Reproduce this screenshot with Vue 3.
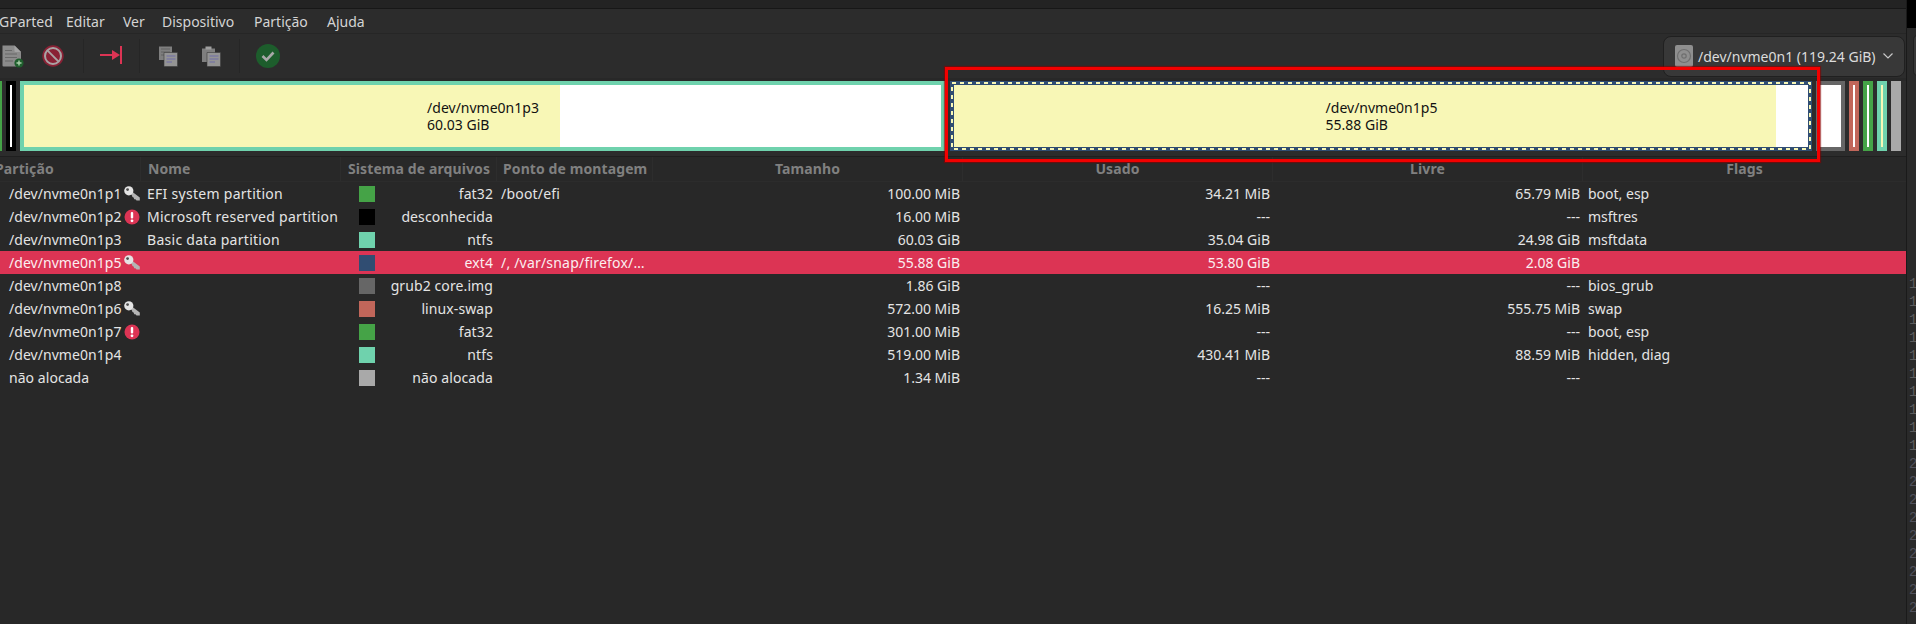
<script setup>
const menus = ['GParted', 'Editar', 'Ver', 'Dispositivo', 'Partição', 'Ajuda']
const cols = ['Partição', 'Nome', 'Sistema de arquivos', 'Ponto de montagem', 'Tamanho', 'Usado', 'Livre', 'Flags']
const cells = [
  { w: 2, c: '#45a347' },
  { w: 10, c: '#000000', fill: '#ffffff' },
  { w: 925, c: '#6fd2ad', used: 536, name: '/dev/nvme0n1p3', size: '60.03 GiB' },
  { w: 862, c: '#304d72', used: 822, name: '/dev/nvme0n1p5', size: '55.88 GiB', sel: true },
  { w: 29, c: '#666666', fill: '#ffffff' },
  { w: 10, c: '#c1665a', fill: '#ffffff' },
  { w: 10, c: '#45a347', fill: '#ffffff' },
  { w: 10, c: '#6fd2ad', fill: '#f8f7b6' },
  { w: 10, c: '#a9a9a9' }
]
const rows = [
  { p: '/dev/nvme0n1p1', i: 'key', n: 'EFI system partition', c: '#45a347', fs: 'fat32', m: '/boot/efi', s: '100.00 MiB', u: '34.21 MiB', l: '65.79 MiB', f: 'boot, esp' },
  { p: '/dev/nvme0n1p2', i: 'alert', n: 'Microsoft reserved partition', c: '#000000', fs: 'desconhecida', m: '', s: '16.00 MiB', u: '---', l: '---', f: 'msftres' },
  { p: '/dev/nvme0n1p3', i: '', n: 'Basic data partition', c: '#6fd2ad', fs: 'ntfs', m: '', s: '60.03 GiB', u: '35.04 GiB', l: '24.98 GiB', f: 'msftdata' },
  { p: '/dev/nvme0n1p5', i: 'key', n: '', c: '#304d72', fs: 'ext4', m: '/, /var/snap/firefox/…', s: '55.88 GiB', u: '53.80 GiB', l: '2.08 GiB', f: '', sel: true },
  { p: '/dev/nvme0n1p8', i: '', n: '', c: '#666666', fs: 'grub2 core.img', m: '', s: '1.86 GiB', u: '---', l: '---', f: 'bios_grub' },
  { p: '/dev/nvme0n1p6', i: 'key', n: '', c: '#c1665a', fs: 'linux-swap', m: '', s: '572.00 MiB', u: '16.25 MiB', l: '555.75 MiB', f: 'swap' },
  { p: '/dev/nvme0n1p7', i: 'alert', n: '', c: '#45a347', fs: 'fat32', m: '', s: '301.00 MiB', u: '---', l: '---', f: 'boot, esp' },
  { p: '/dev/nvme0n1p4', i: '', n: '', c: '#6fd2ad', fs: 'ntfs', m: '', s: '519.00 MiB', u: '430.41 MiB', l: '88.59 MiB', f: 'hidden, diag' },
  { p: 'não alocada', i: '', n: '', c: '#a9a9a9', fs: 'não alocada', m: '', s: '1.34 MiB', u: '---', l: '---', f: '' }
]
const gutter = ['1','1','1','1','1','1','1','1','1','1','2','2','2','2','2','2','2','2','2']
</script>

<template>
  <div class="app">
    <div class="main">
      <div class="titlestrip"></div>
      <nav class="menubar">
        <span v-for="m in menus" :key="m">{{ m }}</span>
      </nav>
      <div class="toolbar">
        <svg class="tool doc" width="22" height="24" viewBox="0 0 22 24">
          <path d="M0.5 1.5 H12.5 L19 8 V21.5 Q19 22.5 18 22.5 H1.5 Q0.5 22.5 0.5 21.5 Z" fill="#8b8b8b"/>
          <path d="M12.5 1.5 L19 8 H13.5 Q12.5 8 12.5 7 Z" fill="#a3a3a3"/>
          <path d="M3 6.5 H10 M3 10 H15 M3 13.5 H15 M3 17 H11" stroke="#696969" stroke-width="1.2"/>
          <circle cx="17" cy="19" r="4.6" fill="#1f5f2d"/>
          <path d="M17 16.5 V21.5 M14.5 19 H19.5" stroke="#a9cfa9" stroke-width="1.4"/>
        </svg>
        <svg class="tool stop" width="22" height="22" viewBox="0 0 22 22">
          <circle cx="11" cy="11" r="10.7" fill="#8a2135"/>
          <circle cx="11" cy="11" r="8" fill="none" stroke="#a9a3a4" stroke-width="2"/>
          <path d="M5.4 5.4 L16.6 16.6" stroke="#a9a3a4" stroke-width="2"/>
        </svg>
        <i class="sep sep1"></i>
        <svg class="tool arrow" width="23" height="20" viewBox="0 0 23 20">
          <path d="M0 9 H14" stroke="#dc3454" stroke-width="2"/>
          <path d="M12 4 L20 9 L12 14 Z" fill="#dc3454"/>
          <path d="M21 0 V18" stroke="#dc3454" stroke-width="2"/>
        </svg>
        <i class="sep sep2"></i>
        <svg class="tool copy" width="19" height="21" viewBox="0 0 19 21">
          <path d="M0 0.5 H13 V14 H0 Z" fill="#7f7f7f"/>
          <path d="M2 3 H11 M2 6 H11 M2 9 H8" stroke="#626262" stroke-width="1"/>
          <path d="M5 6.5 H18.5 V20.5 H5 Z" fill="#949494" stroke="#3a3a3a" stroke-width="0.6"/>
          <path d="M7.5 10 H16.5 M7.5 13 H16.5 M7.5 16 H13" stroke="#6f6da6" stroke-width="1"/>
        </svg>
        <svg class="tool paste" width="19" height="21" viewBox="0 0 19 21">
          <path d="M0 2.5 H13 V16 H0 Z" fill="#7f7f7f"/>
          <path d="M3.5 0.5 H9.5 V3.5 H3.5 Z" fill="#a0a0a0"/>
          <path d="M5 6.5 H18.5 V20.5 H5 Z" fill="#949494" stroke="#3a3a3a" stroke-width="0.6"/>
          <path d="M7.5 10 H16.5 M7.5 13 H16.5 M7.5 16 H13" stroke="#6f6da6" stroke-width="1"/>
        </svg>
        <i class="sep sep3"></i>
        <svg class="tool check" width="24" height="24" viewBox="0 0 24 24">
          <circle cx="12" cy="12" r="12" fill="#1d5d2c"/>
          <path d="M6.5 12 L10.5 16 L17.5 8.5" fill="none" stroke="#a8a8a8" stroke-width="2.6"/>
        </svg>
        <div class="combo">
          <svg width="18" height="22" viewBox="0 0 18 22">
            <rect x="0" y="0" width="18" height="22" rx="2" fill="#8f8f8f"/>
            <circle cx="9" cy="11" r="6.5" fill="none" stroke="#6f6f6f" stroke-width="1.2"/>
            <circle cx="9" cy="11" r="2.2" fill="none" stroke="#6f6f6f" stroke-width="1.2"/>
          </svg>
          <span class="combotext">/dev/nvme0n1 (119.24 GiB)</span>
          <svg class="chev" width="10" height="6" viewBox="0 0 10 6">
            <path d="M0.5 0.5 L5 5 L9.5 0.5" fill="none" stroke="#c8c8c8" stroke-width="1.2"/>
          </svg>
        </div>
      </div>
      <div class="map">
        <div v-for="(d, k) in cells" :key="k" class="cell" :class="{ selcell: d.sel }" :style="{ width: d.w + 'px', background: d.c }">
          <div v-if="d.w > 8 && d.c !== '#a9a9a9'" class="inner" :style="{ background: d.fill || '#ffffff' }">
            <div v-if="d.used" class="used" :style="{ width: d.used + 'px' }"></div>
          </div>
          <svg v-if="d.sel" class="dash" :width="d.w" height="70">
            <rect x="2" y="2" :width="d.w - 4" height="66" fill="none" stroke="#f8f7b6" stroke-width="2" stroke-dasharray="4 4"/>
          </svg>
          <div v-if="d.name" class="label"><div>{{ d.name }}<br>{{ d.size }}</div></div>
        </div>
      </div>
      <div class="table">
        <div class="grid head">
          <div v-for="(c, k) in cols" :key="c" class="th" :class="'h' + k">{{ c }}</div>
        </div>
        <div v-for="r in rows" :key="r.p + r.fs" class="grid row" :class="{ sel: r.sel }">
          <div class="td part">
            <span class="ptext">{{ r.p }}</span>
            <svg v-if="r.i === 'key'" class="state" width="16" height="15" viewBox="0 0 16 15">
              <path d="M6.5 7.5 L8.2 5.8 L15.8 11.6 V14.6 H12.6 L11.4 13.2 L10.2 13.2 L9.6 11.6 L8.4 11 L8 9.6 Z" fill="#b4b4b4"/>
              <circle cx="4.8" cy="4.8" r="4.6" fill="#e4e4e4"/>
              <circle cx="3.6" cy="3.6" r="1.4" fill="#4c4c4c"/>
            </svg>
            <svg v-if="r.i === 'alert'" class="state" width="16" height="16" viewBox="0 0 16 16">
              <circle cx="8" cy="8" r="7.5" fill="#dc3454"/>
              <rect x="6.8" y="3" width="2.4" height="6.5" rx="1" fill="#fff"/>
              <circle cx="8" cy="11.8" r="1.4" fill="#fff"/>
            </svg>
          </div>
          <div class="td name">{{ r.n }}</div>
          <div class="td fs"><i class="swatch" :style="{ background: r.c }"></i><span>{{ r.fs }}</span></div>
          <div class="td mount">{{ r.m }}</div>
          <div class="td num">{{ r.s }}</div>
          <div class="td num">{{ r.u }}</div>
          <div class="td num">{{ r.l }}</div>
          <div class="td flags">{{ r.f }}</div>
        </div>
      </div>
    </div>
    <aside class="side">
      <div class="sidepill"></div>
      <div class="gutter">
        <span v-for="(g, k) in gutter" :key="k" :class="{ two: g === '2' }">{{ g }}</span>
      </div>
    </aside>
    <div class="highlight"></div>
  </div>
</template>

<style>
html, body { margin: 0; background: #282828; }
</style>

<style scoped>
.app {
  position: relative;
  display: flex;
  width: 1916px;
  height: 624px;
  overflow: hidden;
  font-family: "Noto Sans", "Open Sans", sans-serif;
  font-size: 14px;
  color: #e4e4e4;
  background: #282828;
}
.main { width: 1906px; flex: none; overflow: hidden; display: flex; flex-direction: column; }
.titlestrip { height: 8px; background: #232323; border-bottom: 1px solid #171717; }
.menubar {
  height: 24px;
  display: grid;
  grid-template-columns: 67px 57px 39px 92px 73px 60px;
  align-items: center;
  justify-content: start;
  margin-left: -1px;
  background: #2c2c2c;
  border-bottom: 1px solid #262626;
  color: #d4d4d4;
  white-space: nowrap;
}
.toolbar {
  height: 44px;
  display: flex;
  align-items: center;
  padding-left: 2px;
  background: #2c2c2c;
}
.tool { flex: none; display: block; }
.stop { margin-left: 18px; }
.sep { flex: none; width: 1px; height: 34px; background: #262626; }
.sep1 { margin-left: 19px; }
.arrow { margin-left: 16px; }
.sep2 { margin-left: 16px; }
.copy { margin-left: 19px; }
.paste { margin-left: 24px; }
.sep3 { margin-left: 18px; }
.check { margin-left: 16px; }
.combo {
  margin-left: auto;
  margin-right: 1px;
  box-sizing: border-box;
  width: 242px;
  height: 41px;
  display: flex;
  align-items: center;
  padding-left: 11px;
  background: #383838;
  border: 1px solid #202020;
  border-radius: 8px;
  color: #dcdcdc;
}
.combotext { margin-left: 5px; white-space: nowrap; width: 180px; }
.chev { margin-left: 5px; }
.map {
  height: 70px;
  margin-top: 3px;
  padding-bottom: 5px;
  display: flex;
  gap: 4px;
  background: #2c2c2c;
  border-bottom: 1px solid #1f1f1f;
}
.cell { position: relative; flex: none; height: 70px; box-sizing: border-box; }
.selcell { margin-left: 1px; }
.inner { position: absolute; inset: 4px; }
.used { height: 100%; background: #f8f7b6; }
.dash { position: absolute; left: 0; top: 0; }
.label {
  position: absolute;
  inset: 0;
  padding-left: 1px;
  display: flex;
  align-items: center;
  justify-content: center;
  color: #111;
  line-height: 17px;
}
.table { flex: 1; background: #282828; }
.grid {
  display: grid;
  grid-template-columns: 141px 200px 156px 156px 310px 310px 310px 323px;
}
.head { height: 25px; align-items: stretch; }
.th {
  display: flex;
  align-items: center;
  justify-content: center;
  padding-bottom: 2px;
  border-right: 1px solid #2d2d2d;
  border-bottom: 1px solid #2c2c2c;
  box-sizing: border-box;
  font-weight: 700;
  letter-spacing: 0.1px;
  color: #808080;
  white-space: nowrap;
  overflow: hidden;
}
.h0 { justify-content: flex-start; text-indent: -5px; }
.h1, .h2 { justify-content: flex-start; padding-left: 7px; }
.h3 { justify-content: flex-start; padding-left: 6px; }
.h7 { border-right: none; }
.row { height: 23px; align-items: center; }
.row.sel { background: #dc3454; color: #fbeef0; }
.td { line-height: 23px; white-space: nowrap; overflow: hidden; box-sizing: border-box; }
.part { display: flex; align-items: center; padding-left: 9px; }
.ptext { width: 115px; flex: none; letter-spacing: 0.05px; }
.state { flex: none; }
.name { padding-left: 6px; letter-spacing: 0.28px; }
.fs { display: flex; align-items: center; justify-content: space-between; padding: 0 4px 0 18px; letter-spacing: 0.1px; }
.swatch { flex: none; width: 16px; height: 16px; }
.mount { padding-left: 4px; letter-spacing: 0.2px; }
.num { text-align: right; padding-right: 3px; }
.flags { padding-left: 5px; }
.side {
  width: 10px;
  flex: none;
  box-sizing: border-box;
  border-left: 1px solid #1a1a1a;
  background: linear-gradient(#000 0, #000 28px, #2a2a2a 28px);
  position: relative;
  overflow: hidden;
}
.sidepill {
  position: absolute;
  left: 6px;
  top: 34px;
  width: 10px;
  height: 41px;
  background: #383838;
  border: 1px solid #202020;
  border-radius: 6px;
}
.gutter {
  position: absolute;
  left: 2px;
  top: 275px;
  display: flex;
  flex-direction: column;
  font-family: "Liberation Mono", monospace;
  font-size: 14px;
  line-height: 18px;
  color: #5c5c5c;
}
.gutter .two { color: #50505a; }
.highlight {
  position: absolute;
  left: 945px;
  top: 67px;
  width: 875px;
  height: 95px;
  box-sizing: border-box;
  border: 3px solid #f20000;
  box-shadow: 0 0 1px 1px rgba(140, 0, 0, 0.6);
}
</style>
